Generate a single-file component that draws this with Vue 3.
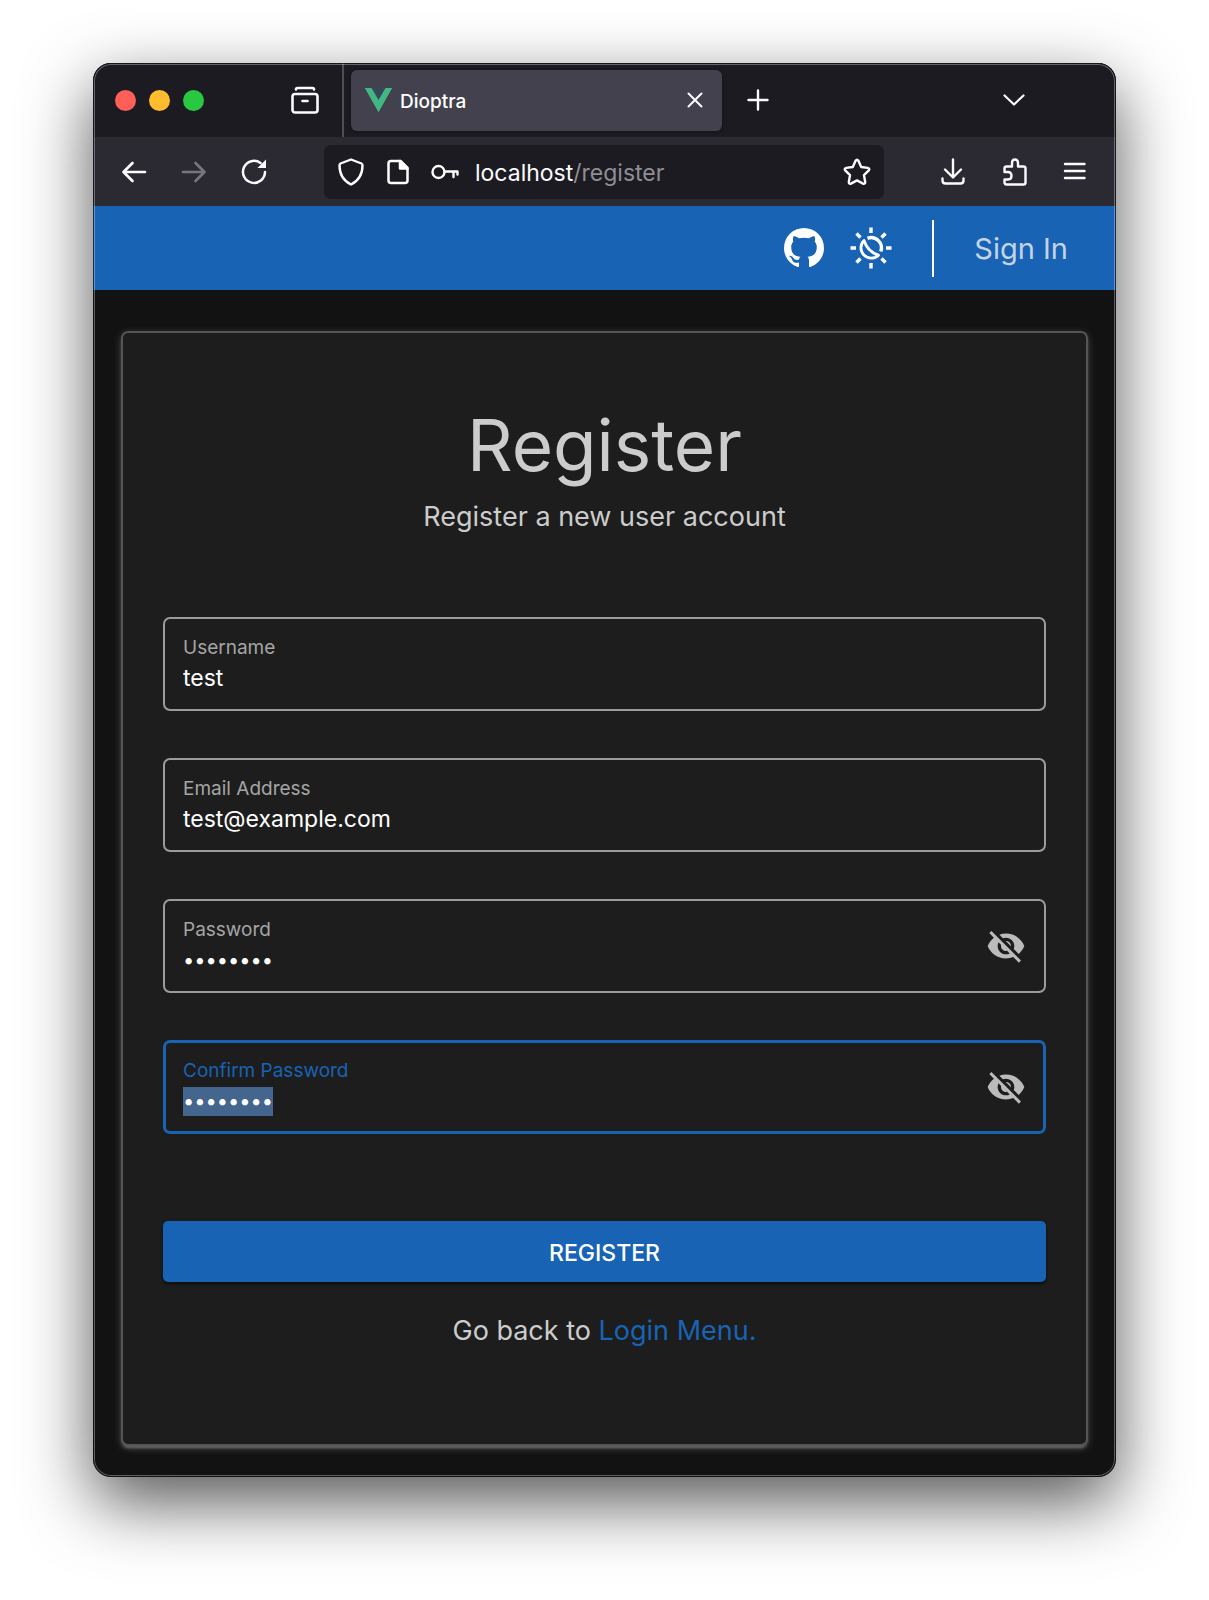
<script setup>
import { onMounted, ref } from 'vue'

const fields = ref([
  { id: 'username', label: 'Username', value: 'test', type: 'text' },
  { id: 'email', label: 'Email Address', value: 'test@example.com', type: 'email' },
  { id: 'password', label: 'Password', value: 'password', type: 'password', secret: true },
  { id: 'confirm', label: 'Confirm Password', value: 'password', type: 'password', secret: true },
])

onMounted(() => {
  const confirm = document.getElementById('confirm')
  confirm.focus()
  confirm.select()
})

function toggle(field) {
  field.type = field.type === 'password' ? 'text' : 'password'
}
</script>

<template>
  <div class="desktop">
    <div class="window">
      <div class="tabs">
        <div class="lights">
          <button class="light red" aria-label="Close window"></button>
          <button class="light amber" aria-label="Minimise window"></button>
          <button class="light green" aria-label="Zoom window"></button>
        </div>
        <button class="icon archive" aria-label="Recent browsing">
          <svg viewBox="0 0 28 28" width="28" height="28" class="line" stroke-width="2.6">
            <path d="M5 3.500Q5 2 6.500 2H21.500Q23 2 23 3.500" />
            <rect x="1.500" y="8" width="25" height="18.500" rx="2.500" />
            <path d="M11.500 15H16.500" />
          </svg>
        </button>
        <div class="strip-line"></div>
        <div class="tab">
          <svg viewBox="0 0 27 24" width="27" height="24">
            <path fill="#41b883" d="M0 0H5.500L13.500 14L21.500 0H27L13.500 24Z" />
            <path fill="#35495e" d="M7 0H11L13.500 4.500L16 0H20L13.500 11.500Z" />
            <path fill="#41b883" d="M0 0H6.500L13.500 12L20.500 0H27L13.500 24Z" />
          </svg>
          <span class="tab-title">Dioptra</span>
          <button class="icon" aria-label="Close tab">
            <svg viewBox="0 0 16 16" width="16" height="16" class="line" stroke-width="2">
              <path d="M1.500 1.500L14.500 14.500M14.500 1.500L1.500 14.500" />
            </svg>
          </button>
        </div>
        <button class="icon plus" aria-label="New tab">
          <svg viewBox="0 0 22 22" width="22" height="22" class="line" stroke-width="2.4">
            <path d="M11 1.500V20.500M1.500 11H20.500" />
          </svg>
        </button>
        <button class="icon all-tabs" aria-label="List all tabs">
          <svg viewBox="0 0 22 22" width="22" height="22" class="line" stroke-width="2.2">
            <path d="M1.500 6.500L11 15.500L20.500 6.500" />
          </svg>
        </button>
      </div>

      <div class="toolbar">
        <button class="icon" aria-label="Back">
          <svg viewBox="0 0 28 28" width="28" height="28" class="line" stroke-width="2.7">
            <path d="M25 14H3.500M12.500 5L3.500 14L12.500 23" />
          </svg>
        </button>
        <button class="icon dim" aria-label="Forward">
          <svg viewBox="0 0 28 28" width="28" height="28" class="line" stroke-width="2.7">
            <path d="M3 14H24.500M15.500 5L24.500 14L15.500 23" />
          </svg>
        </button>
        <button class="icon reload" aria-label="Reload">
          <svg viewBox="0 0 28 28" width="28" height="28" class="line" stroke-width="2.5">
            <path d="M25 14A11 11 0 1 1 20.500 5" />
            <path class="solid" d="M26 1.500V10H17.500Z" stroke="none" />
          </svg>
        </button>
        <div class="url">
          <div class="site-info">
            <svg viewBox="0 0 28 28" width="28" height="28" class="line" stroke-width="2.4">
              <path d="M14 1.500L24.500 5.500Q25.500 6 25.500 7.500C25.500 15 22 22.500 14 26.500C6 22.500 2.500 15 2.500 7.500Q2.500 6 3.500 5.500Z" />
            </svg>
            <svg viewBox="0 0 22 26" width="22" height="26" class="line" stroke-width="2.5">
              <path d="M13.500 2H4Q1.500 2 1.500 4.500V21.500Q1.500 24 4 24H18Q20.500 24 20.500 21.500V9Z" />
              <path class="solid" d="M13 2V9.500H20.500Z" />
            </svg>
            <svg viewBox="0 0 28 16" width="28" height="16" class="line" stroke-width="2.400">
              <circle cx="7.500" cy="8" r="6" />
              <path d="M13.500 7.500H26.500M22.500 8V13M26.500 8V10.500" />
            </svg>
          </div>
          <span class="address"><b>localhost</b>/register</span>
          <button class="icon" aria-label="Bookmark this page">
            <svg viewBox="0 0 28 28" width="28" height="28" class="line" stroke-width="2.4">
              <path d="M12.600 2.800Q14 0.800 15.400 2.800L18.200 9L24.800 9.900Q27.200 10.500 25.800 12.400L21 17.200L22.200 24Q22.200 26.400 20 25.600L14 22.400L8 25.600Q5.800 26.400 5.800 24L7 17.200L2.200 12.400Q0.800 10.500 3.200 9.900L9.800 9Z" />
            </svg>
          </button>
        </div>
        <button class="icon" aria-label="Downloads">
          <svg viewBox="0 0 28 28" width="28" height="28" class="line" stroke-width="2.4">
            <path d="M13 1.500V19M5 11.500L13 19.500L21 11.500" />
            <path d="M2.500 20.500V22.500Q2.500 25.500 5.500 25.500H20.500Q23.500 25.500 23.500 22.500V20.500" />
          </svg>
        </button>
        <button class="icon" aria-label="Extensions">
          <svg viewBox="0 0 28 28" width="28" height="28" class="line" stroke-width="2.4">
            <path d="M4.500 14V10.500Q4.500 8.500 6.500 8.500H12V5Q12 1.500 15 1.500Q18 1.500 18 5V8.500H23.500Q25.500 8.500 25.500 10.500V24.500Q25.500 26.500 23.500 26.500H6.500Q4.500 26.500 4.500 24.500V21.500H8Q11.500 21.500 11.500 17.800Q11.500 14 8 14Z" />
          </svg>
        </button>
        <button class="icon" aria-label="Menu">
          <svg viewBox="0 0 28 28" width="28" height="28" class="line" stroke-width="2.4">
            <path d="M5 6H24.500M5 13H24.500M5 20H24.500" />
          </svg>
        </button>
      </div>

      <header class="app-bar">
        <a class="icon" href="#github" aria-label="GitHub">
          <svg viewBox="2 2 20 20" width="40" height="40" class="solid">
            <path d="M12 2A10 10 0 0 0 2 12c0 4.420 2.870 8.170 6.840 9.500.5.080.66-.23.66-.5v-1.690c-2.770.6-3.360-1.340-3.360-1.340-.46-1.160-1.110-1.470-1.110-1.470-.91-.62.07-.6.07-.6 1 .07 1.530 1.030 1.530 1.030.87 1.520 2.340 1.070 2.910.83.09-.65.35-1.090.63-1.340-2.220-.25-4.550-1.110-4.550-4.920 0-1.110.38-2 1.030-2.710-.1-.25-.45-1.290.1-2.640 0 0 .84-.27 2.750 1.020.79-.22 1.650-.33 2.500-.33s1.710.11 2.500.33c1.910-1.290 2.750-1.020 2.750-1.020.55 1.350.2 2.390.1 2.640.65.71 1.030 1.600 1.030 2.710 0 3.820-2.340 4.660-4.570 4.910.36.31.69.92.69 1.850V21c0 .27.16.59.67.5C19.140 20.160 22 16.420 22 12A10 10 0 0 0 12 2z" />
          </svg>
        </a>
        <button class="icon" aria-label="Toggle dark mode">
          <svg viewBox="0 0 42 42" width="42" height="42" class="rays" stroke-width="3.4">
            <path d="M21 0.500V6M21 36V41.500M0.500 21H6M36 21H41.500M6.500 6.500L10.500 10.500M31.500 31.500L35.500 35.500M35.500 6.500L31.500 10.500M10.500 31.500L6.500 35.500" />
            <path d="M17.500 11.300A10.300 10.300 0 0 1 30.800 24.500" />
            <path stroke-width="2.800" stroke-linejoin="round" d="M14 13.500A10.300 10.300 0 0 0 28.500 28.200Q17.500 24.500 14 13.500Z" />
          </svg>
        </button>
        <div class="bar-line"></div>
        <a class="sign-in" href="#login">Sign In</a>
      </header>

      <main class="page">
        <form class="card" @submit.prevent>
          <h1>Register</h1>
          <p class="lead">Register a new user account</p>
          <div class="fields">
            <div v-for="f in fields" :key="f.id" class="field">
              <div class="entry">
                <label :for="f.id">{{ f.label }}</label>
                <input :id="f.id" v-model="f.value" :type="f.type" autocomplete="off" spellcheck="false" />
              </div>
              <button v-if="f.secret" type="button" class="icon eye" aria-label="Show password" @click="toggle(f)">
                <svg viewBox="0 0 24 24" width="40" height="40">
                  <path d="M12 7c2.760 0 5 2.240 5 5 0 .65-.13 1.260-.36 1.830l2.920 2.920c1.510-1.260 2.700-2.890 3.430-4.750-1.730-4.390-6-7.500-11-7.500-1.400 0-2.740.25-3.980.7l2.160 2.160C10.740 7.130 11.350 7 12 7zM2 4.270l2.280 2.280.46.46C3.080 8.300 1.780 10.020 1 12c1.730 4.390 6 7.500 11 7.500 1.550 0 3.030-.3 4.380-.84l.42.42L19.730 22 21 20.730 3.270 3 2 4.270zM7.530 9.800l1.550 1.550c-.05.21-.08.43-.08.65 0 1.660 1.340 3 3 3 .22 0 .44-.03.65-.08l1.550 1.550c-.67.33-1.410.53-2.200.53-2.760 0-5-2.240-5-5 0-.79.2-1.530.53-2.200zm4.310-.78l3.150 3.150.02-.16c0-1.660-1.340-3-3-3l-.17.01z" />
                </svg>
              </button>
            </div>
          </div>
          <button type="submit" class="submit">REGISTER</button>
          <p class="back">Go back to <a href="#login">Login Menu.</a></p>
        </form>
      </main>
    </div>
  </div>
</template>

<style>
body {
  margin: 0;
  background: #fff;
}
</style>

<style scoped>
.desktop {
  padding: 63px 93px 123px;
  font-family: Inter, "Liberation Sans", sans-serif;
  color: #fff;
}
.window {
  position: relative;
  overflow: hidden;
  border-radius: 18px;
  background: #121212;
  box-shadow: 0 25px 68px rgba(0, 0, 0, 0.67);
}
/* light rim over the window edge */
.window::after {
  content: "";
  position: absolute;
  inset: 0;
  border: 1px solid rgba(20, 20, 24, 0.7);
  border-radius: 18px;
  box-shadow: inset 0 0 0 1px rgba(255, 255, 255, 0.32);
  pointer-events: none;
}
svg {
  display: block;
  flex: none;
}
.icon {
  display: block;
  flex: none;
  padding: 0;
  border: 0;
  background: none;
  color: #fbfbfe;
}
.line {
  fill: none;
  stroke: currentColor;
  stroke-linecap: round;
  stroke-linejoin: round;
}
.solid {
  fill: currentColor;
}
.dim {
  color: #77767c;
}
.tabs {
  display: flex;
  align-items: center;
  height: 74px;
  padding: 0 91px 0 22px;
  background: #1c1b22;
}
.lights {
  display: flex;
  gap: 13px;
}
.light {
  width: 21px;
  height: 21px;
  padding: 0;
  border: 0;
  border-radius: 50%;
}
.red {
  background: #ff5f57;
}
.amber {
  background: #febc2e;
}
.green {
  background: #28c840;
}
.archive {
  margin: 0 23px 0 87px;
}
.strip-line {
  width: 2px;
  height: 100%;
  background: #4f4e55;
}
.tab {
  display: flex;
  align-items: center;
  box-sizing: border-box;
  flex: 0 1 371px;
  height: 61px;
  margin-left: 7px;
  padding: 0 19px 0 14px;
  border-radius: 6px;
  background: #42414d;
  box-shadow: 0 0 4px rgba(0, 0, 0, 0.4);
}
.tab-title {
  flex: 1;
  margin-left: 8px;
  padding-top: 4px;
  font-size: 19px;
  font-weight: 500;
  line-height: 24px;
}
.plus {
  margin-left: 25px;
}
.all-tabs {
  margin-left: auto;
}
.toolbar {
  display: flex;
  align-items: center;
  gap: 32px;
  height: 69px;
  padding: 0 28px 0 27px;
  background: #2b2a33;
}
.url {
  display: flex;
  align-items: center;
  box-sizing: border-box;
  flex: 1;
  gap: 16px;
  height: 54px;
  margin: 0 24px;
  padding: 0 13px;
  border-radius: 7px;
  background: #1c1b22;
}
.site-info {
  display: flex;
  align-items: center;
  gap: 22px;
}
.address {
  flex: 1;
  padding-top: 2px;
  font-size: 23px;
  line-height: 32px;
  color: #8f8e94;
}
.address b {
  font-weight: 400;
  color: #fbfbfe;
}
.app-bar {
  display: flex;
  align-items: center;
  justify-content: flex-end;
  height: 84px;
  padding-right: 48px;
  background: #1863b4;
}
.app-bar .icon {
  margin-right: 26px;
  color: #fff;
}
.rays {
  fill: none;
  stroke: currentColor;
}
.bar-line {
  width: 2px;
  height: 57px;
  margin: 0 40px 0 14px;
  background: #fff;
}
.sign-in {
  padding-top: 2px;
  font-size: 29px;
  line-height: 40px;
  color: #c5d3e6;
  text-decoration: none;
}
.page {
  padding: 41px 28px 31px;
}
.card {
  box-sizing: border-box;
  padding: 70px 40px 93px;
  border: 2px solid #555;
  border-radius: 7px;
  background: #1d1d1d;
  box-shadow:
    0 2px 8px rgba(255, 255, 255, 0.2),
    0 3px 3px rgba(255, 255, 255, 0.14),
    0 5px 2px -3px rgba(255, 255, 255, 0.12);
}
h1 {
  margin: 0;
  font-size: 71px;
  font-weight: 400;
  line-height: 84px;
  text-align: center;
  color: #ccc;
}
p {
  margin: 0;
  font-size: 27px;
  line-height: 40px;
  text-align: center;
  color: #ccc;
}
.lead {
  margin-top: 10px;
}
.fields {
  display: flex;
  flex-direction: column;
  gap: 47px;
  margin-top: 80px;
}
.field {
  display: flex;
  align-items: center;
  box-sizing: border-box;
  height: 94px;
  padding: 0 18px;
  border: 2px solid #9b9b9b;
  border-radius: 7px;
}
.field:focus-within {
  border: 3px solid #1863b4;
  padding: 0 17px;
}
.entry {
  display: flex;
  flex: 1;
  flex-direction: column;
  gap: 2px;
  padding-bottom: 2px;
}
label {
  font-size: 19px;
  line-height: 28px;
  color: #a5a5a5;
}
.field:focus-within label {
  color: #1863b4;
}
input {
  width: 100%;
  height: 29px;
  padding: 0;
  border: 0;
  outline: 0;
  background: none;
  font: 400 23px/29px Inter, "Liberation Sans", sans-serif;
  color: #fff;
}
input[type="password"] {
  font-size: 20px;
}
input::selection {
  background: #44658e;
  color: #fff;
}
.eye {
  color: #bbb;
}
.eye svg {
  fill: currentColor;
}
.submit {
  display: block;
  width: 100%;
  height: 61px;
  margin-top: 87px;
  padding: 2px 0 0;
  border: 0;
  border-radius: 5px;
  background: #1863b4;
  box-shadow: 0 2px 3px rgba(0, 0, 0, 0.6);
  font: 500 23px/32px Inter, "Liberation Sans", sans-serif;
  color: #fff;
}
.back {
  margin-top: 29px;
}
.back a {
  color: #1863b4;
  text-decoration: none;
}
</style>
